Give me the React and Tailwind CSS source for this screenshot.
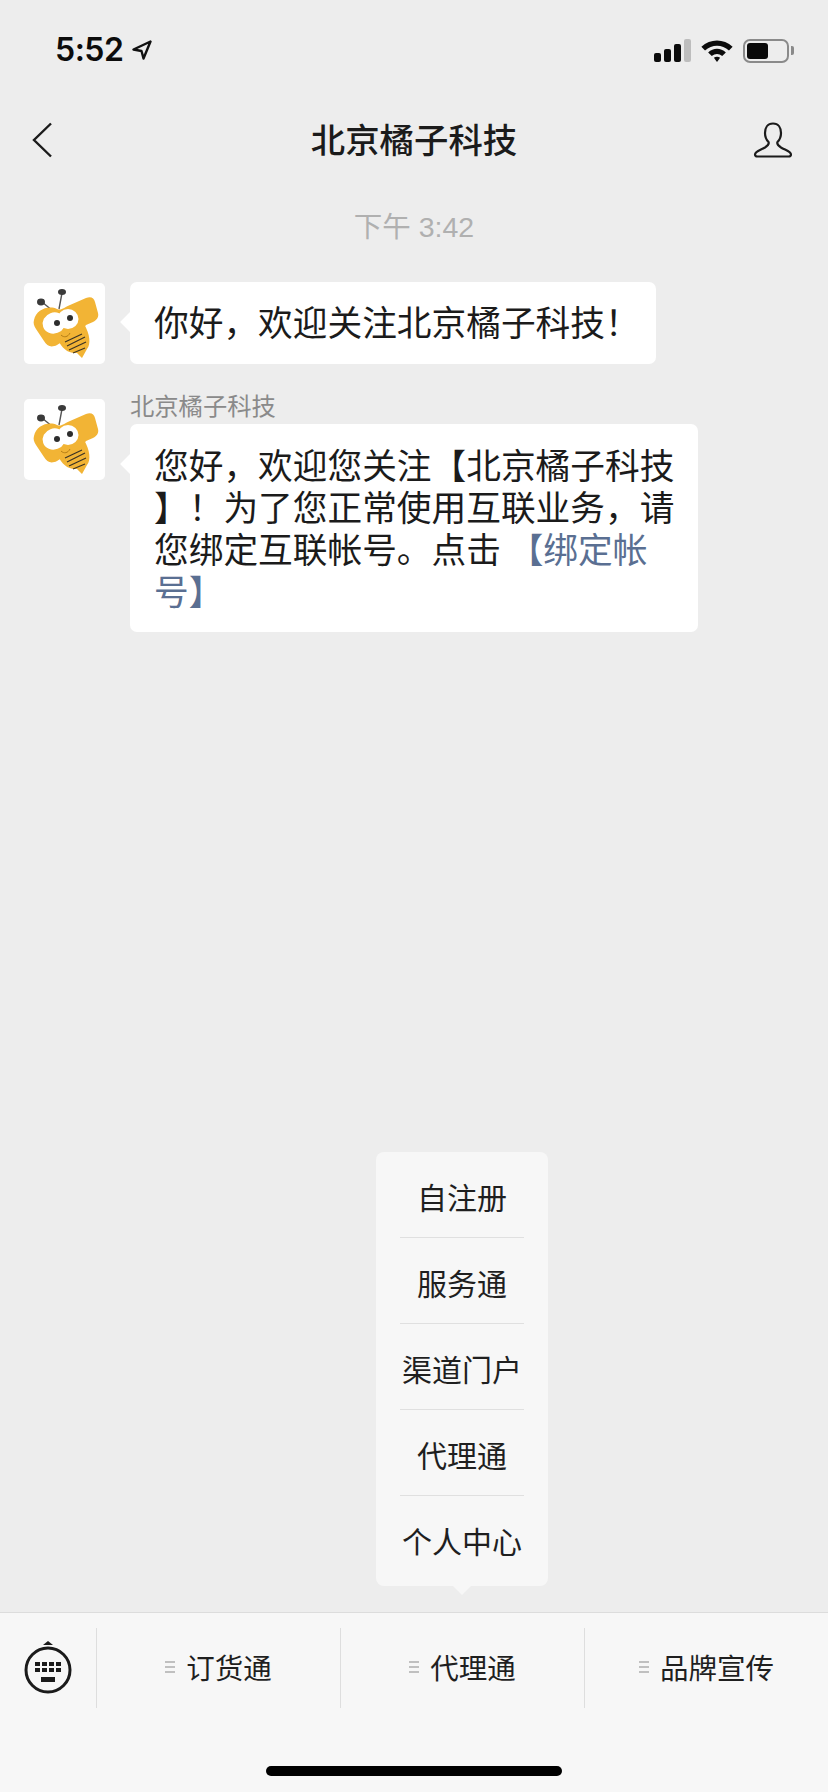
const cjk = 'font-["Noto_Sans_CJK_SC","Noto_Sans",sans-serif]'

function BeeAvatar({ className = '' }) {
  return (
    <div className={`w-[81px] h-[81px] shrink-0 bg-white rounded-[5px] overflow-hidden ${className}`}>
      <svg viewBox="4 5 81 81" className="w-full h-full">
        {/* antennae */}
        <path d="M33 33 L22 24 M39 31 L42 15" stroke="#555" strokeWidth="1.4" fill="none" />
        <ellipse cx="21" cy="24" rx="4" ry="3.4" fill="#3a3a3a" />
        <ellipse cx="42" cy="14" rx="4" ry="3" fill="#3a3a3a" />
        {/* tail */}
        <path d="M38 62 L64 46 C70 56 71 66 67 71 L62 80 L57 75 C48 76 42 70 38 62 Z" fill="#f2b435" />
        {/* head */}
        <path d="M14 42 C16 32 28 27 37 31 C42 33 44 29 50 27 L66 20 C71 18 74 20 75 24 L78 35 C79 39 77 42 73 44 L66 47 C64 51 60 53 56 55 L37 67 C31 70 27 68 24 63 L16 51 C14 48 13 45 14 42 Z" fill="#f2b435" />
        {/* eyes */}
        <ellipse cx="34" cy="45" rx="11.5" ry="10.5" fill="#fff" transform="rotate(-20 34 45)" />
        <ellipse cx="48" cy="41" rx="10.5" ry="10" fill="#fff" />
        <circle cx="37" cy="45" r="3" fill="#2d2d2d" />
        <circle cx="50" cy="40" r="3" fill="#2d2d2d" />
        <path d="M41 57 C44 60 48 59 50 55" stroke="#b57e16" strokeWidth="1" fill="none" />
        {/* stripes */}
        <path d="M45 64 L62 56 M47 68 L65 59 M49 72 L66 64 M53 75 L65 70" stroke="#3b3325" strokeWidth="1.2" fill="none" />
      </svg>
    </div>
  )
}

function Bubble({ children, className = '' }) {
  return (
    <div className={`relative bg-white rounded-[7px] px-[24px] text-[34.7px] leading-[42px] text-[#1b1b1b] ${className}`}>
      <div className="absolute left-[-7px] top-[33px] w-[14px] h-[14px] bg-white rotate-45" />
      <div className="relative whitespace-nowrap">{children}</div>
    </div>
  )
}

function StatusBar() {
  return (
    <div className="h-[92px] shrink-0 flex items-start justify-between pl-[55px] pr-[34px] pt-[33px]">
      <div className="flex items-center gap-[9px]">
        <span className='font-["Inter",sans-serif] font-semibold text-[32px] leading-[34px] tracking-[-0.5px] text-[#0c0c0c]'>5:52</span>
        <svg viewBox="0 0 20 20" className="w-[20px] h-[20px]">
          <path d="M18.5 1.5 L1.5 9.5 L9.5 11 L11.5 18.5 Z" fill="none" stroke="#111" strokeWidth="2.4" strokeLinejoin="round" />
        </svg>
      </div>
      <div className="flex items-center gap-[9px] pt-[5px]">
        <div className="flex items-end gap-[3px] h-[23px]">
          <div className="w-[7px] h-[9px] bg-[#0c0c0c] rounded-[2px]" />
          <div className="w-[7px] h-[13px] bg-[#0c0c0c] rounded-[2px]" />
          <div className="w-[7px] h-[18px] bg-[#0c0c0c] rounded-[2px]" />
          <div className="w-[7px] h-[23px] bg-[#bdbdbd] rounded-[2px]" />
        </div>
        <svg viewBox="0 0 32 24" className="w-[34px] h-[25px]">
          <path d="M1 8.5 C9.5 0.5 22.5 0.5 31 8.5 L27.5 12 C21 6 11 6 4.5 12 Z" fill="#0c0c0c" />
          <path d="M7.5 14.8 C12.5 10.3 19.5 10.3 24.5 14.8 L21 18.2 C18 15.6 14 15.6 11 18.2 Z" fill="#0c0c0c" transform="translate(0 -1)" />
          <path d="M13 19 C14.8 17.6 17.2 17.6 19 19 L16 23 Z" fill="#0c0c0c" />
        </svg>
        <div className="flex items-center gap-[2px]">
          <div className="w-[46px] h-[24px] border-2 border-[#8a8a8a] rounded-[7px] p-[2px]">
            <div className="w-[21px] h-full bg-[#0a0a0a] rounded-[3px]" />
          </div>
          <div className="w-[3px] h-[9px] bg-[#8a8a8a] rounded-r-[2px]" />
        </div>
      </div>
    </div>
  )
}

function NavBar() {
  return (
    <div className="h-[96px] shrink-0 flex items-center justify-between pl-[31px] pr-[35px]">
      <div className="w-[40px]">
        <svg viewBox="0 0 22 36" className="w-[22px] h-[36px]">
          <path d="M20 1.5 L3 18 L20 34.5" fill="none" stroke="#1b1b1b" strokeWidth="2.4" />
        </svg>
      </div>
      <h1 className="text-[34.4px] font-medium leading-none text-[#1b1b1b] mb-[4px] ml-[4px]">北京橘子科技</h1>
      <svg viewBox="0 0 40 36" className="w-[40px] h-[36px]">
        <path
          d="M20 1.5 C14.5 1.5 12 6 12 11 C12 15 13.5 18 15.5 20 C16.5 22 15 23.5 12 25.5 C8 28 2 29.5 2 32.5 C2 33.8 3 34.5 4.5 34.5 L35.5 34.5 C37 34.5 38 33.8 38 32.5 C38 29.5 32 28 28 25.5 C25 23.5 23.5 22 24.5 20 C26.5 18 28 15 28 11 C28 6 25.5 1.5 20 1.5 Z"
          fill="none"
          stroke="#1b1b1b"
          strokeWidth="2.2"
        />
      </svg>
    </div>
  )
}

function Messages() {
  return (
    <div className="pl-[24px] flex flex-col">
      <div className="flex gap-[25px] items-start mt-[14px]">
        <BeeAvatar className="mt-[1px]" />
        <Bubble className="w-[526px] pt-[18px] pb-[22px]">你好，欢迎关注北京橘子科技！</Bubble>
      </div>
      <div className="flex gap-[25px] items-start mt-[29px]">
        <BeeAvatar className="mt-[6px]" />
        <div>
          <div className="h-[24px] mb-[7px] text-[24.3px] leading-[24px] text-[#8a8a8a]">北京橘子科技</div>
          <Bubble className="w-[568px] pt-[19px] pb-[21px]">
            您好，欢迎您关注【北京橘子科技
            <br />
            】！为了您正常使用互联业务，请
            <br />
            您绑定互联帐号。点击 <span className="text-[#5a6f92]">【绑定帐</span>
            <br />
            <span className="text-[#5a6f92]">号】</span>
          </Bubble>
        </div>
      </div>
    </div>
  )
}

const popupItems = ['自注册', '服务通', '渠道门户', '代理通']

function PopupMenu() {
  return (
    <div className="absolute left-[376px] top-[1152px] w-[172px] h-[434px] bg-[#f7f7f7] rounded-[8px] flex flex-col text-[30px] text-[#1f1f1f]">
      <div className="absolute left-[79px] bottom-[-6px] w-[14px] h-[14px] bg-[#f7f7f7] rotate-45" />
      {popupItems.map((item) => (
        <div key={item} className="h-[86px] mx-[24px] pt-[4px] flex items-center justify-center border-b border-[#e0e0e0] whitespace-nowrap">
          {item}
        </div>
      ))}
      <div className="relative flex-1 flex items-center justify-center whitespace-nowrap pb-[2px]">个人中心</div>
    </div>
  )
}

function MenuIcon() {
  return (
    <svg viewBox="0 0 10 12" className="w-[10px] h-[12px] shrink-0">
      <path d="M0 1 H10 M0 6 H10 M0 11 H10" stroke="#8a8a8a" strokeWidth="1.2" />
    </svg>
  )
}

const tabs = ['订货通', '代理通', '品牌宣传']

function BottomBar() {
  return (
    <div className="h-[180px] shrink-0 bg-[#f7f7f7] border-t border-[#dcdcdc] pt-[15px]">
      <div className="flex h-[80px]">
        <div className="w-[97px] shrink-0 flex items-center justify-center border-r border-[#dedede]">
          <svg viewBox="0 0 50 56" className="w-[50px] h-[56px]">
            <path d="M20 5 L25 1 L30 5 Z" fill="#1b1b1b" />
            <circle cx="25" cy="30" r="22" fill="none" stroke="#1b1b1b" strokeWidth="3" />
            <path
              d="M12 22h5v4h-5z M19 22h5v4h-5z M26 22h5v4h-5z M33 22h5v4h-5z M12 28h5v4h-5z M19 28h5v4h-5z M26 28h5v4h-5z M33 28h5v4h-5z M18 37h14v5H18z"
              fill="#1b1b1b"
            />
          </svg>
        </div>
        {tabs.map((tab, i) => (
          <div
            key={tab}
            className={`flex-1 flex items-center justify-center gap-[11px] text-[28.5px] text-[#1f1f1f] pb-[2px] ${i < 2 ? 'border-r border-[#dedede]' : ''}`}
          >
            <MenuIcon />
            <span>{tab}</span>
          </div>
        ))}
      </div>
      <div className="w-[296px] h-[10px] mx-auto mt-[58px] bg-black rounded-full" />
    </div>
  )
}

export default function App() {
  return (
    <div className={`relative w-[828px] h-[1792px] overflow-hidden bg-[#ededed] flex flex-col ${cjk}`}>
      <StatusBar />
      <NavBar />
      <div className='h-[80px] shrink-0 flex items-center justify-center font-["Liberation_Sans","Noto_Sans_CJK_SC",sans-serif] text-[28.5px] text-[#b0b0b0] pb-[2px]'>下午 3:42</div>
      <div className="flex-1">
        <Messages />
      </div>
      <PopupMenu />
      <BottomBar />
    </div>
  )
}
